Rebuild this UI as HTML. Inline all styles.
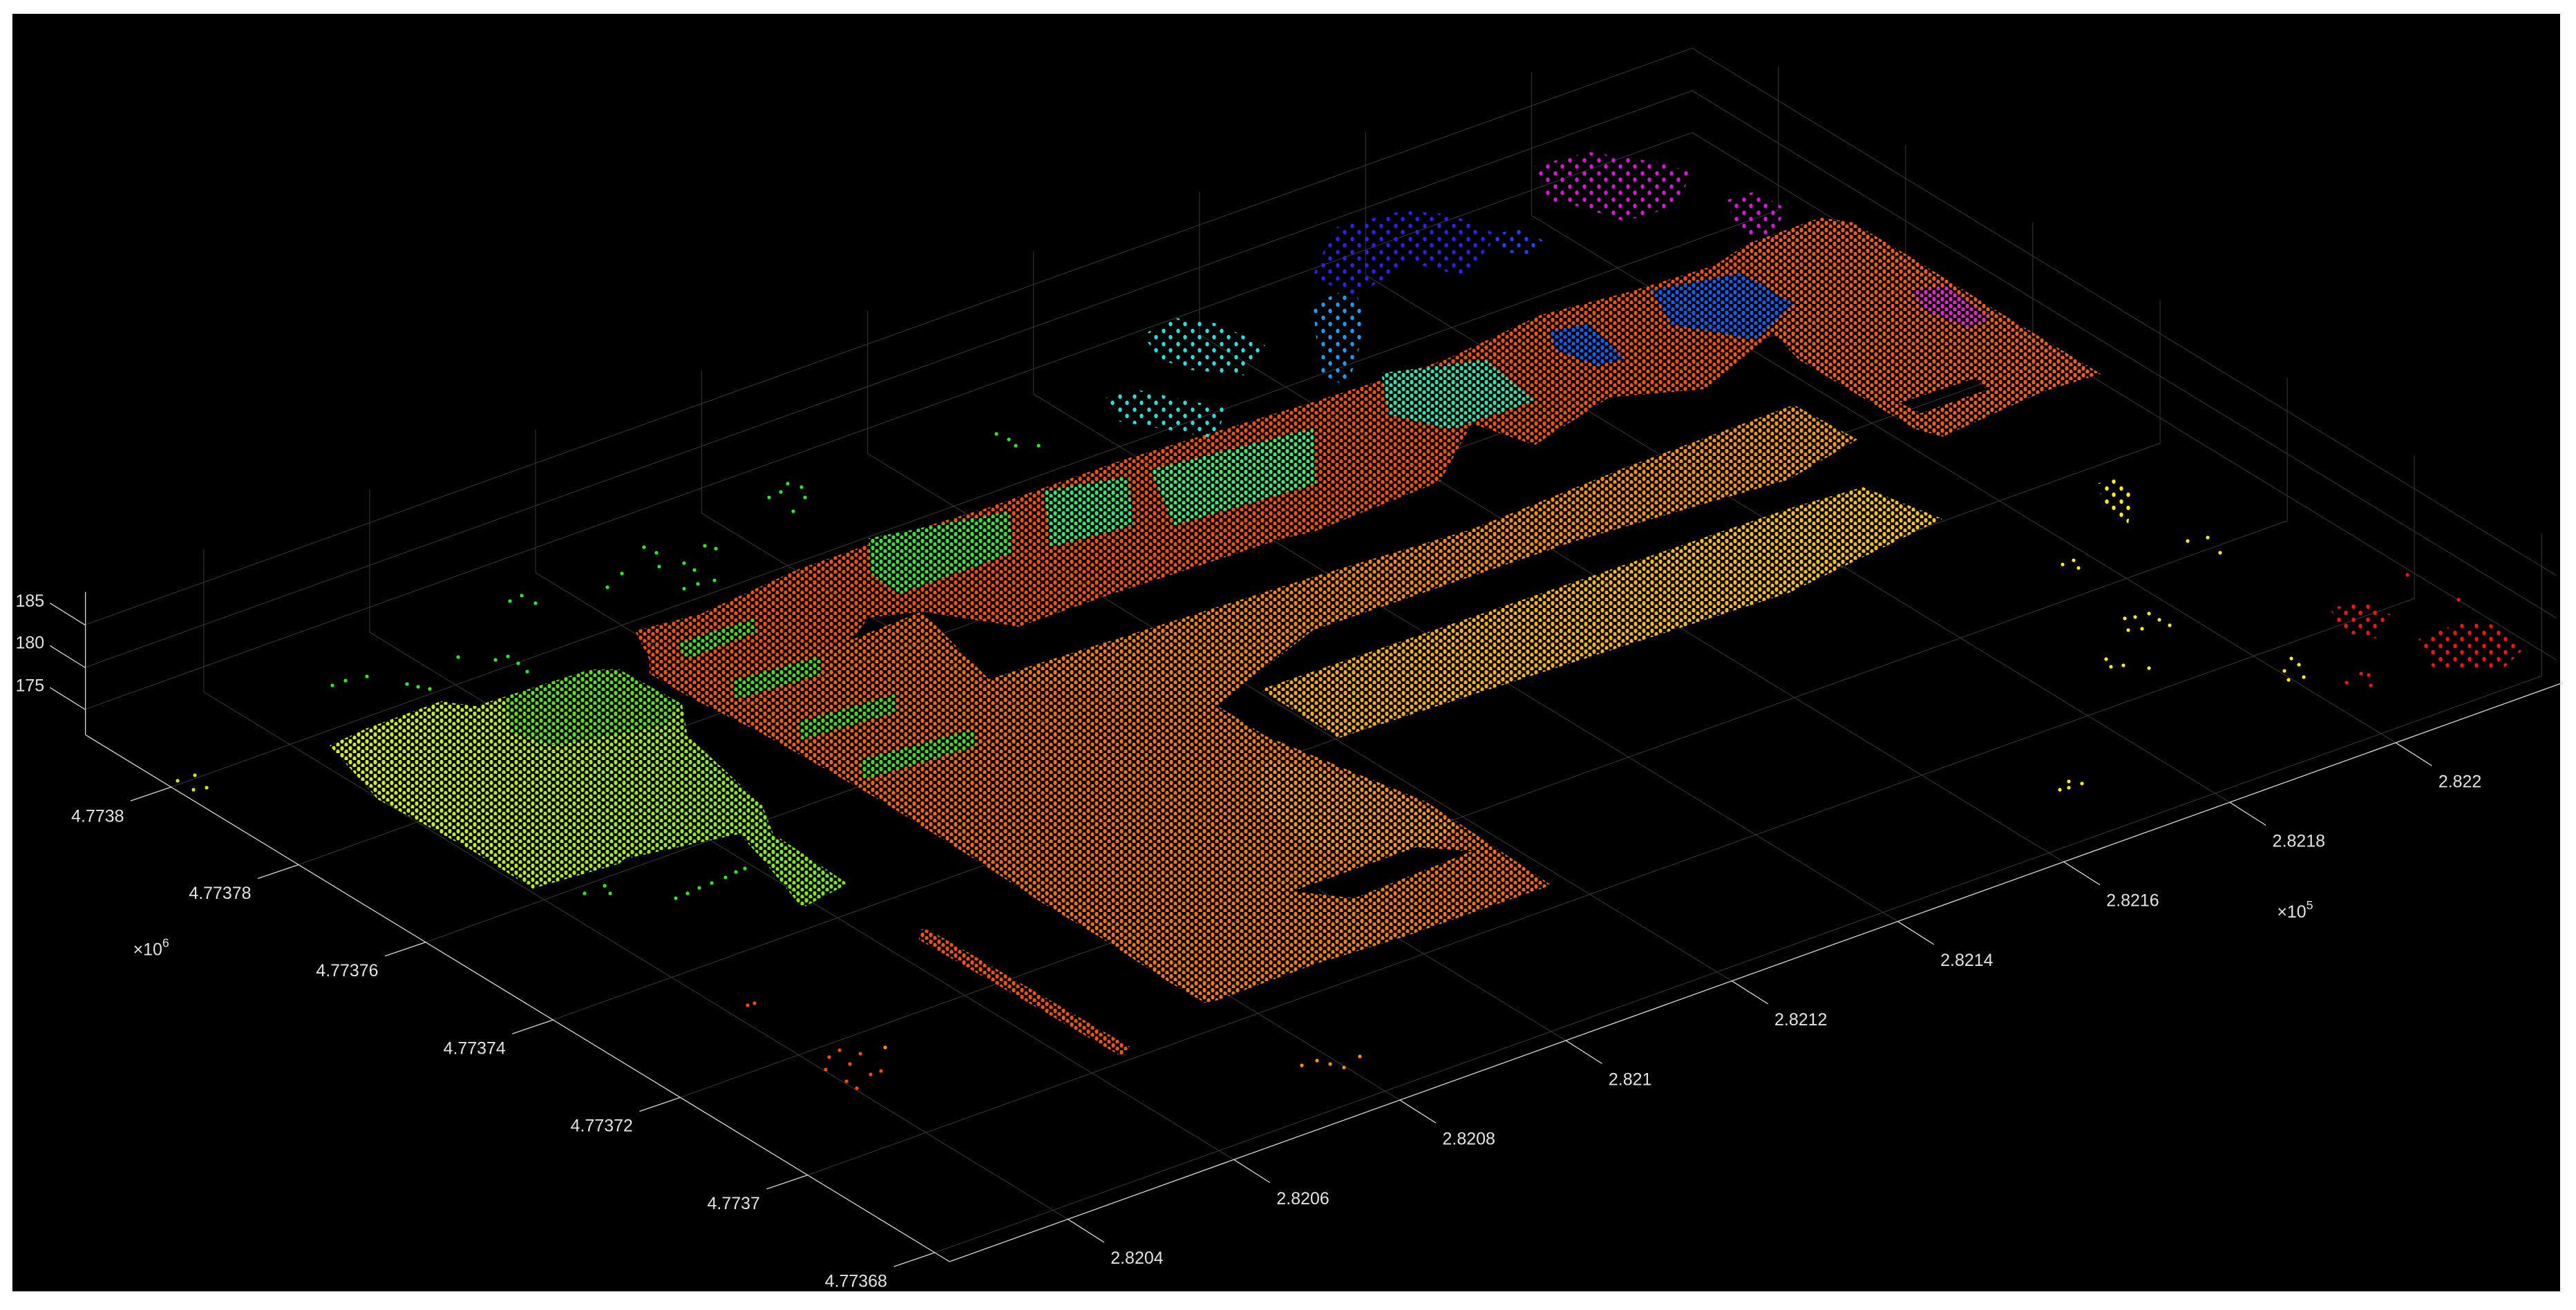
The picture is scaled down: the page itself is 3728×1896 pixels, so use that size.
<!DOCTYPE html>
<html><head><meta charset="utf-8"><style>
html,body{margin:0;padding:0;background:#fff;}
svg{display:block;}
text{font-family:"Liberation Sans",Arial,sans-serif;}
</style></head><body>
<svg width="3728" height="1896" viewBox="0 0 3728 1896" xmlns="http://www.w3.org/2000/svg">
<defs>
<pattern id="pd" width="12" height="10" patternUnits="userSpaceOnUse">
<ellipse cx="3" cy="3" rx="2.6" ry="3.4" fill="#fff"/><ellipse cx="9" cy="8" rx="2.6" ry="3.4" fill="#fff"/>
</pattern>
<pattern id="ps" width="21" height="19" patternUnits="userSpaceOnUse">
<ellipse cx="4" cy="4" rx="2.7" ry="3.2" fill="#fff"/><ellipse cx="14" cy="13" rx="2.7" ry="3.2" fill="#fff"/>
</pattern>
<mask id="md" maskUnits="userSpaceOnUse" x="0" y="0" width="3728" height="1896"><rect width="3728" height="1896" fill="url(#pd)"/></mask>
<mask id="ms" maskUnits="userSpaceOnUse" x="0" y="0" width="3728" height="1896"><rect width="3728" height="1896" fill="url(#ps)"/></mask>
<linearGradient id="gY" gradientUnits="userSpaceOnUse" x1="477" y1="0" x2="1227" y2="0">
<stop offset="0" stop-color="#dcf000"/><stop offset="0.5" stop-color="#a8f000"/><stop offset="1" stop-color="#70ee00"/></linearGradient>
<linearGradient id="gO" gradientUnits="userSpaceOnUse" x1="940" y1="0" x2="2245" y2="0">
<stop offset="0" stop-color="#ff5200"/><stop offset="0.55" stop-color="#ff7400"/><stop offset="0.8" stop-color="#ff8000"/><stop offset="1" stop-color="#ff6000"/></linearGradient>
<linearGradient id="gM" gradientUnits="userSpaceOnUse" x1="1431" y1="0" x2="2688" y2="0">
<stop offset="0" stop-color="#ff7800"/><stop offset="1" stop-color="#ff9a00"/></linearGradient>
<linearGradient id="gYe" gradientUnits="userSpaceOnUse" x1="1824" y1="0" x2="2811" y2="0">
<stop offset="0" stop-color="#ffa800"/><stop offset="1" stop-color="#ffc400"/></linearGradient>
</defs>
<rect x="0" y="0" width="3728" height="1896" fill="#fff"/>
<rect x="18" y="20" width="3687" height="1849" fill="#000"/>

<g transform="scale(2.3776)">
<g stroke="#343434" stroke-width="0.45" fill="none">
<line x1="650" y1="742.2" x2="124" y2="421.2"/>
<line x1="751" y1="705.9" x2="225" y2="384.9"/>
<line x1="852" y1="669.6" x2="326" y2="348.6"/>
<line x1="953.1" y1="633.4" x2="427.1" y2="312.4"/>
<line x1="1054.1" y1="597.1" x2="528.1" y2="276.1"/>
<line x1="1155.1" y1="560.9" x2="629.1" y2="239.9"/>
<line x1="1256.1" y1="524.6" x2="730.1" y2="203.6"/>
<line x1="1357.2" y1="488.4" x2="831.2" y2="167.4"/>
<line x1="1458.2" y1="452.1" x2="932.2" y2="131.1"/>
<line x1="124" y1="421.2" x2="124" y2="334.2"/>
<line x1="225" y1="384.9" x2="225" y2="297.9"/>
<line x1="326" y1="348.6" x2="326" y2="261.6"/>
<line x1="427.1" y1="312.4" x2="427.1" y2="225.4"/>
<line x1="528.1" y1="276.1" x2="528.1" y2="189.1"/>
<line x1="629.1" y1="239.9" x2="629.1" y2="152.9"/>
<line x1="730.1" y1="203.6" x2="730.1" y2="116.6"/>
<line x1="831.2" y1="167.4" x2="831.2" y2="80.4"/>
<line x1="932.2" y1="131.1" x2="932.2" y2="44.1"/>
<line x1="569.1" y1="762.5" x2="1547.1" y2="411.5"/>
<line x1="491.6" y1="715.3" x2="1469.6" y2="364.3"/>
<line x1="414.2" y1="668" x2="1392.2" y2="317"/>
<line x1="336.8" y1="620.8" x2="1314.8" y2="269.8"/>
<line x1="259.3" y1="573.5" x2="1237.3" y2="222.5"/>
<line x1="181.9" y1="526.3" x2="1159.9" y2="175.3"/>
<line x1="104.5" y1="479" x2="1082.5" y2="128"/>
<line x1="1547.1" y1="411.5" x2="1547.1" y2="324.5"/>
<line x1="1469.6" y1="364.3" x2="1469.6" y2="277.3"/>
<line x1="1392.2" y1="317" x2="1392.2" y2="230"/>
<line x1="1314.8" y1="269.8" x2="1314.8" y2="182.8"/>
<line x1="1237.3" y1="222.5" x2="1237.3" y2="135.5"/>
<line x1="1159.9" y1="175.3" x2="1159.9" y2="88.3"/>
<line x1="1082.5" y1="128" x2="1082.5" y2="41"/>
<line x1="52" y1="431.7" x2="1030" y2="80.7"/>
<line x1="52" y1="406.2" x2="1030" y2="55.2"/>
<line x1="52" y1="380.3" x2="1030" y2="29.3"/>
<line x1="1030" y1="80.7" x2="1556" y2="401.7"/>
<line x1="1030" y1="55.2" x2="1556" y2="376.2"/>
<line x1="1030" y1="29.3" x2="1556" y2="350.3"/>
</g>
<g stroke="#d6d6d6" stroke-width="0.55" fill="none">
<line x1="52" y1="447.3" x2="52" y2="360.3"/>
<line x1="52" y1="447.3" x2="578" y2="768"/>
<line x1="578" y1="768" x2="1560" y2="415.6"/>
<line x1="52" y1="432" x2="30.4" y2="418.5"/>
<line x1="52" y1="406.5" x2="30.4" y2="393"/>
<line x1="52" y1="380.6" x2="30.4" y2="367.1"/>
<line x1="569.1" y1="762.5" x2="544.1" y2="771"/>
<line x1="491.6" y1="715.3" x2="466.6" y2="723.8"/>
<line x1="414.2" y1="668" x2="389.2" y2="676.5"/>
<line x1="336.8" y1="620.8" x2="311.8" y2="629.3"/>
<line x1="259.3" y1="573.5" x2="234.3" y2="582"/>
<line x1="181.9" y1="526.3" x2="156.9" y2="534.8"/>
<line x1="104.5" y1="479" x2="79.5" y2="487.5"/>
<line x1="650" y1="742.2" x2="672" y2="756.2"/>
<line x1="751" y1="705.9" x2="773" y2="719.9"/>
<line x1="852" y1="669.6" x2="874" y2="683.6"/>
<line x1="953.1" y1="633.4" x2="975.1" y2="647.4"/>
<line x1="1054.1" y1="597.1" x2="1076.1" y2="611.1"/>
<line x1="1155.1" y1="560.9" x2="1177.1" y2="574.9"/>
<line x1="1256.1" y1="524.6" x2="1278.1" y2="538.6"/>
<line x1="1357.2" y1="488.4" x2="1379.2" y2="502.4"/>
<line x1="1458.2" y1="452.1" x2="1480.2" y2="466.1"/>
</g>
<g fill="#e2e2e2" font-size="10.5">
<text x="27" y="369.3" text-anchor="end">185</text>
<text x="27" y="394.8" text-anchor="end">180</text>
<text x="27" y="420.8" text-anchor="end">175</text>
<text x="540" y="783.3" text-anchor="end">4.77368</text>
<text x="462.6" y="736.1" text-anchor="end">4.7737</text>
<text x="385.2" y="688.8" text-anchor="end">4.77372</text>
<text x="307.8" y="641.6" text-anchor="end">4.77374</text>
<text x="230.3" y="594.3" text-anchor="end">4.77376</text>
<text x="152.9" y="547.1" text-anchor="end">4.77378</text>
<text x="75.5" y="500.3" text-anchor="end">4.7738</text>
<text x="676" y="769.3">2.8204</text>
<text x="777" y="733">2.8206</text>
<text x="878" y="696.7">2.8208</text>
<text x="979.1" y="660.5">2.821</text>
<text x="1080.1" y="624.2">2.8212</text>
<text x="1181.1" y="588">2.8214</text>
<text x="1282.1" y="551.7">2.8216</text>
<text x="1383.2" y="515.5">2.8218</text>
<text x="1484.2" y="479.2">2.822</text>
<text x="81" y="581.5">×10<tspan font-size="7.5" dy="-5">6</tspan></text>
<text x="1386" y="558.5">×10<tspan font-size="7.5" dy="-5">5</tspan></text>
</g>
</g>

<g mask="url(#md)">
<polygon fill="url(#gY)" points="477,1079 531,1054 638,1015 688,1022 854,969 896,969 987,1019 995,1065 1103,1165 1119,1207 1227,1279 1161,1314 1103,1243 1070,1207 904,1243 896,1250 771,1286 680,1229 547,1157"/>
<polygon fill="#58e400" points="730,1010 854,969 896,969 987,1019 960,1050 800,1080 740,1060"/>
<polygon fill="#ff5000" points="919,913 1015,888 1155,824 1283,779 1429,735 1627,665 1900,582 2091,521 2229,456 2359,422 2482,384 2528,353 2566,483 2470,563 2329,575 2221,644 2130,613 2084,697 1900,770 1857,779 1710,827 1602,862 1474,907 1334,885 1257,894 1232,926 1100,960 1028,958 940,955"/>
<path fill="#ff5a10" fill-rule="evenodd" d="M2528,353 L2635,315 L2681,322 L2765,372 L2895,453 L3040,541 L2956,567 L2811,632 L2772,621 L2604,521 L2566,483 Z M2749,583 L2857,548 L2876,564 L2780,598 Z"/>
<polygon fill="url(#gO)" points="940,955 1100,960 1232,926 1334,885 1431,983 1761,1021 1831,1065 1986,1129 2063,1160 2112,1192 2245,1281 2028,1357 1901,1396 1747,1453 1691,1421 1593,1357 1509,1307 1410,1243 1277,1160 1200,1116 1100,1060 1000,1010 940,975"/>
<polygon fill="#ff9410" points="1830,1100 1990,1130 2110,1195 2060,1240 1900,1230 1820,1160"/>
<polygon fill="#000" points="1870,1290 2050,1226 2130,1232 1960,1300"/>
<polygon fill="url(#gM)" points="1431,983 1900,835 2130,766 2359,674 2596,586 2688,636 2589,694 2283,782 1900,912 1761,1021"/>
<polygon fill="url(#gYe)" points="1824,998 2589,736 2696,705 2811,751 2589,858 1937,1068"/>
<polygon fill="#40e010" points="983,930 1091,895 1095,915 990,955"/>
<polygon fill="#40e010" points="1059,985 1187,950 1190,975 1065,1012"/>
<polygon fill="#40e010" points="1155,1045 1295,1005 1298,1030 1160,1070"/>
<polygon fill="#40e010" points="1244,1100 1410,1055 1412,1080 1250,1128"/>
<polygon fill="#30e830" points="1257,779 1461,740 1465,800 1300,860 1260,830"/>
<polygon fill="#20f070" points="1512,710 1633,690 1640,760 1520,792"/>
<polygon fill="#30f070" points="1665,680 1900,620 1905,700 1700,760"/>
<polygon fill="#20e8b0" points="1999,540 2150,521 2221,580 2100,621 2010,600"/>
<polygon fill="#1060ff" points="2390,420 2520,395 2596,440 2540,491 2420,470"/>
<polygon fill="#1060ff" points="2244,480 2300,468 2351,520 2310,529 2250,505"/>
<polygon fill="#f020d0" points="2765,420 2820,414 2880,460 2850,475 2790,450"/>
<polygon fill="#ff5000" points="1333,1345 1345,1346 1635,1515 1625,1530 1330,1360"/>
</g>

<g mask="url(#ms)">
<polygon fill="#20e0e0" points="1653,485 1700,460 1760,468 1831,500 1800,543 1720,535 1680,520"/>
<polygon fill="#20e0e0" points="1601,575 1650,565 1720,580 1774,590 1760,635 1680,620 1620,610"/>
<polygon fill="#10a0ff" points="1900,440 1960,414 1977,470 1950,560 1910,540"/>
<polygon fill="#2a20ff" points="1930,330 2030,305 2100,310 2168,340 2120,400 2040,380 1960,430 1900,400"/>
<polygon fill="#2040ff" points="2160,340 2200,330 2237,350 2220,368 2170,365"/>
<polygon fill="#e010e0" points="2221,240 2300,220 2400,235 2451,250 2420,300 2350,320 2290,300 2240,290"/>
<polygon fill="#e010e0" points="2497,290 2540,277 2581,300 2570,345 2520,340"/>
<polygon fill="#ffee00" points="3034,700 3060,694 3087,705 3080,759 3050,740"/>
<polygon fill="#ff1010" points="3372,880 3420,872 3461,890 3440,924 3390,915"/>
<polygon fill="#ff1010" points="3500,925 3560,901 3620,905 3651,940 3620,970 3520,965"/>
</g>

<g fill="#ffee00">
<circle cx="2985" cy="817" r="2.6"/><circle cx="3001" cy="811" r="2.6"/><circle cx="3008" cy="822" r="2.6"/>
<circle cx="3166" cy="783" r="2.6"/><circle cx="3195" cy="778" r="2.6"/><circle cx="3213" cy="800" r="2.6"/>
<circle cx="3075" cy="895" r="2.6"/><circle cx="3090" cy="893" r="2.6"/><circle cx="3100" cy="910" r="2.6"/><circle cx="3110" cy="888" r="2.6"/><circle cx="3125" cy="897" r="2.6"/><circle cx="3140" cy="905" r="2.6"/><circle cx="3080" cy="912" r="2.6"/>
<circle cx="3048" cy="954" r="2.6"/><circle cx="3055" cy="965" r="2.6"/><circle cx="3073" cy="963" r="2.6"/><circle cx="3110" cy="967" r="2.6"/>
<circle cx="3306" cy="971" r="2.6"/><circle cx="3316" cy="953" r="2.6"/><circle cx="3327" cy="962" r="2.6"/><circle cx="3334" cy="980" r="2.6"/><circle cx="3312" cy="984" r="2.6"/>
<circle cx="2981" cy="1143" r="2.6"/><circle cx="2994" cy="1131" r="2.6"/><circle cx="2994" cy="1140" r="2.6"/><circle cx="3013" cy="1134" r="2.6"/>
</g>
<g fill="#ff1010">
<circle cx="3484" cy="832" r="2.6"/><circle cx="3558" cy="868" r="2.6"/><circle cx="3396" cy="988" r="2.6"/><circle cx="3417" cy="975" r="2.6"/><circle cx="3431" cy="992" r="2.6"/><circle cx="3428" cy="977" r="2.6"/>
</g>
<g fill="#20f020">
<circle cx="481" cy="992" r="2.6"/><circle cx="500" cy="985" r="2.6"/><circle cx="531" cy="979" r="2.6"/>
<circle cx="589" cy="990" r="2.6"/><circle cx="605" cy="994" r="2.6"/><circle cx="622" cy="997" r="2.6"/>
<circle cx="663" cy="951" r="2.6"/><circle cx="717" cy="955" r="2.6"/><circle cx="735" cy="950" r="2.6"/><circle cx="750" cy="960" r="2.6"/><circle cx="763" cy="972" r="2.6"/>
<circle cx="738" cy="870" r="2.6"/><circle cx="755" cy="862" r="2.6"/><circle cx="775" cy="873" r="2.6"/>
<circle cx="879" cy="850" r="2.6"/><circle cx="900" cy="830" r="2.6"/><circle cx="950" cy="800" r="2.6"/><circle cx="990" cy="815" r="2.6"/><circle cx="1036" cy="794" r="2.6"/><circle cx="1010" cy="845" r="2.6"/>
<circle cx="978" cy="1300" r="2.6"/><circle cx="995" cy="1293" r="2.6"/><circle cx="1012" cy="1285" r="2.6"/><circle cx="1030" cy="1278" r="2.6"/><circle cx="1050" cy="1270" r="2.6"/><circle cx="1065" cy="1262" r="2.6"/><circle cx="1078" cy="1257" r="2.6"/>
<circle cx="846" cy="1293" r="2.6"/><circle cx="875" cy="1282" r="2.6"/><circle cx="883" cy="1293" r="2.6"/>
<circle cx="1442" cy="628" r="2.6"/><circle cx="1460" cy="636" r="2.6"/><circle cx="1470" cy="645" r="2.6"/><circle cx="1503" cy="645" r="2.6"/>
<circle cx="1113" cy="720" r="2.6"/><circle cx="1130" cy="712" r="2.6"/><circle cx="1140" cy="700" r="2.6"/><circle cx="1160" cy="705" r="2.6"/><circle cx="1165" cy="720" r="2.6"/><circle cx="1148" cy="740" r="2.6"/>
<circle cx="932" cy="792" r="2.6"/><circle cx="954" cy="820" r="2.6"/><circle cx="990" cy="852" r="2.6"/><circle cx="1034" cy="840" r="2.6"/><circle cx="1005" cy="825" r="2.6"/><circle cx="1020" cy="790" r="2.6"/>
</g>
<g fill="#c8f000">
<circle cx="257" cy="1130" r="2.6"/><circle cx="282" cy="1122" r="2.6"/><circle cx="280" cy="1143" r="2.6"/><circle cx="299" cy="1140" r="2.6"/>
</g>
<g fill="#ff4a00">
<circle cx="1082" cy="1455" r="2.6"/><circle cx="1092" cy="1452" r="2.6"/><circle cx="1200" cy="1530" r="2.6"/><circle cx="1215" cy="1520" r="2.6"/><circle cx="1230" cy="1540" r="2.6"/><circle cx="1245" cy="1525" r="2.6"/><circle cx="1260" cy="1555" r="2.6"/><circle cx="1275" cy="1550" r="2.6"/><circle cx="1225" cy="1565" r="2.6"/><circle cx="1240" cy="1575" r="2.6"/><circle cx="1195" cy="1548" r="2.6"/>
</g>
<g fill="#ff9000">
<circle cx="1884" cy="1542" r="2.6"/><circle cx="1906" cy="1535" r="2.6"/><circle cx="1925" cy="1540" r="2.6"/><circle cx="1945" cy="1545" r="2.6"/><circle cx="1968" cy="1529" r="2.6"/>
<circle cx="1281" cy="1516" r="2.6"/>
</g>
</svg>
</body></html>
